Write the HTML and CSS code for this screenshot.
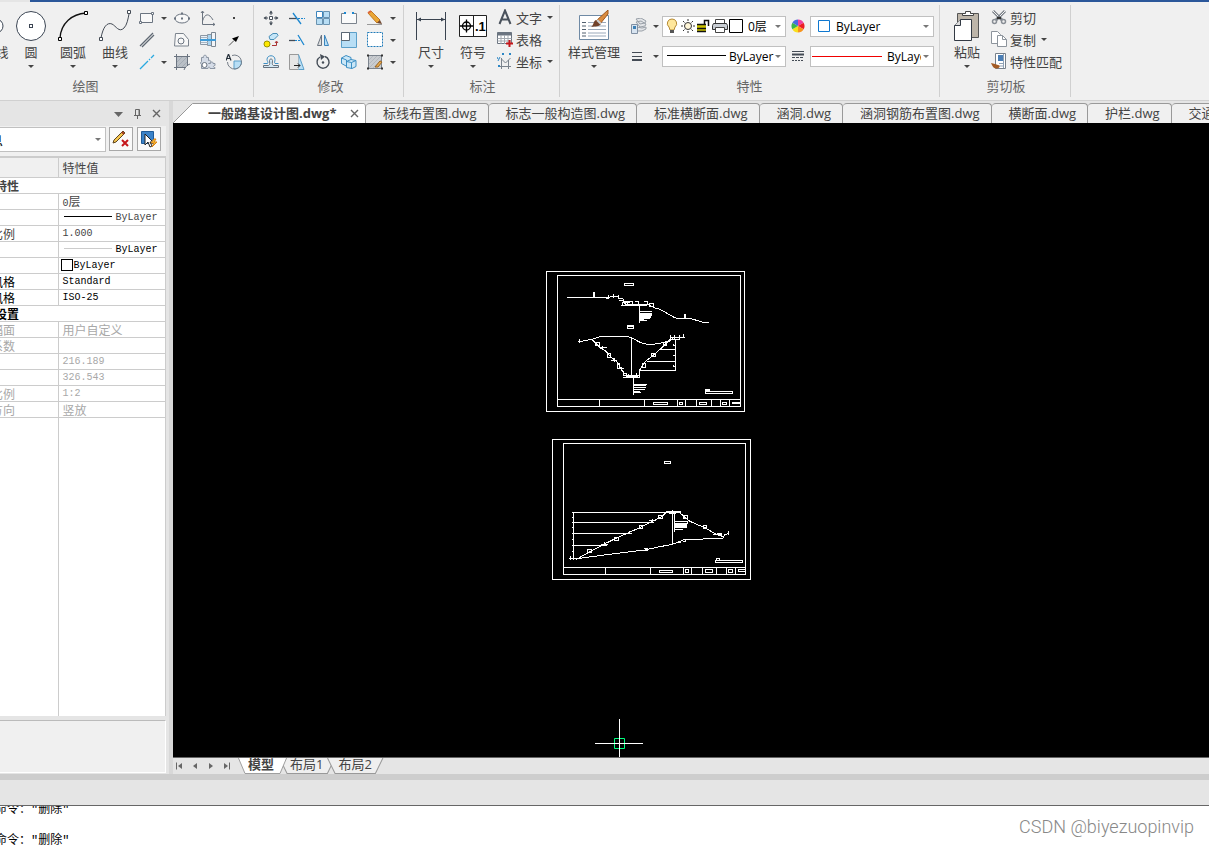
FILE: index.html
```html
<!DOCTYPE html>
<html lang="zh-CN">
<head>
    <meta charset="UTF-8" />
    <meta name="viewport" content="width=device-width, initial-scale=1.0"/>
    <title>一般路基设计图.dwg</title>
    <link rel="stylesheet" href="styles.css">
</head>
<body>
    <div class="title-strip"></div>

    <header class="ribbon">
        <section class="group group-draw">
            <div class="tools">
                <button type="button" class="big-button">
                    <svg width="32" height="32" viewBox="0 0 32 32"><path d="M2 26 10 10H19" stroke="#3c4654"/><circle cx="23" cy="16" r="7" fill="#fff" stroke="#3c4654"/></svg>
                    <span>多段线</span><i class="caret"></i>
                </button>
                <button type="button" class="big-button">
                    <svg width="32" height="32" viewBox="0 0 32 32"><circle cx="16" cy="16" r="14.5" fill="#fff" stroke="#3c4654"/><rect x="14.5" y="14.5" width="3" height="3" fill="#fff" stroke="#3c4654"/></svg>
                    <span>圆</span><i class="caret"></i>
                </button>
                <button type="button" class="big-button">
                    <svg width="32" height="32" viewBox="0 0 32 32"><path d="M3 28C4 13 15 4 29 3" stroke="#111" stroke-width="1.3"/><path d="M1.5 27.5h3v3h-3zM27.500 1.500h3v3h-3z" fill="#fff" stroke="#000"/></svg>
                    <span>圆弧</span><i class="caret"></i>
                </button>
                <button type="button" class="big-button">
                    <svg width="32" height="32" viewBox="0 0 32 32"><path d="M2 28C4 17 8 12 13 14C17 16 20 23 25 18C28 15 29 9 30 4" stroke="#444b55"/><path d="M.5 27.500h3v3h-3zM28.500.5h3v3h-3z" fill="#fff" stroke="#444b55"/></svg>
                    <span>曲线</span><i class="caret"></i>
                </button>
                <div class="icon-grid draw-grid">
                    <button type="button" aria-label="矩形"><svg width="16" height="16" viewBox="0 0 16 16"><path d="M1.500 3.500h12v9h-12z" fill="#f8f8f8" stroke="#6b7480"/><path d="M12.500 2.500h2v2h-2zM.5 11.500h2v2h-2z" fill="#fff" stroke="#6b7480"/></svg></button>
                    <button type="button" aria-label="矩形选项"><i class="caret"></i></button>
                    <button type="button" aria-label="椭圆"><svg width="16" height="16" viewBox="0 0 16 16"><ellipse cx="8" cy="8.500" rx="7" ry="4.500" fill="#f8f8f8" stroke="#6b7480"/><path d="M7 7.500h2v2H7zM7 2.500h2v2H7zM0 7.500h2v2H0zM14 7.500h2v2h-2z" fill="#6b7480"/></svg></button>
                    <button type="button" aria-label="抛物线"><svg width="16" height="16" viewBox="0 0 16 16"><path d="M2.500 1v13.500H15M2.500 11C5 3 9 3 13 10M1 3l1.500-2L4 3M13 13l2 1.500-2 1" stroke="#6b7480"/></svg></button>
                    <button type="button" aria-label="点"><svg width="16" height="16" viewBox="0 0 16 16"><path d="M7 7h2v2H7z" fill="#444"/></svg></button>

                    <button type="button" aria-label="平行线"><svg width="16" height="16" viewBox="0 0 16 16"><path d="M1 14 14 1M3 15 15 3" stroke="#5f6873" stroke-width="1.300"/></svg></button>
                    <span></span>
                    <button type="button" aria-label="面域"><svg width="16" height="16" viewBox="0 0 16 16"><path d="M1.500 1.500h8l5 6v6.500H.5z" fill="#f8f8f8" stroke="#7b838d"/><circle cx="7" cy="9" r="3" stroke="#6b7480"/></svg></button>
                    <button type="button" aria-label="轴"><svg width="16" height="16" viewBox="0 0 16 16"><path d="M.5 3.500h7v9h-7z" fill="#e9f1f8" stroke="#8b97a4"/><path d="M7.500 2.500h4v11h-4z" fill="#a9d3ef" stroke="#8b97a4"/><path d="M11.500.5h4v14h-4z" fill="#f3f5f8" stroke="#7b8793"/><path d="M0 8h16" stroke="#3d9bd8" stroke-width="2"/><path d="M1 5.500h7M1 10.500h7" stroke="#a7b6c4"/></svg></button>
                    <button type="button" aria-label="箭头"><svg width="16" height="16" viewBox="0 0 16 16"><path d="M3 13.500 8 8.500" stroke="#555"/><path d="M13 4 6 6.500l4 3.500z" fill="#000"/></svg></button>

                    <button type="button" aria-label="构造线"><svg width="16" height="16" viewBox="0 0 16 16"><path d="M1 15 9 7M10 6l1-1M12 4l3-3" stroke="#29a9e0" stroke-width="1.300"/></svg></button>
                    <button type="button" aria-label="构造线选项"><i class="caret"></i></button>
                    <button type="button" aria-label="填充"><svg width="16" height="16" viewBox="0 0 16 16"><path d="M2.500 2.500h11v8l-3 3h-8z" fill="#b9bfc6"/><path d="M3 8l5-5M3 13 13 3M8 13l5-5" stroke="#a3abb4"/><path d="M2.500 0v16M13.500 0v12M0 2.500h16M0 13.500h12M16 10c-3 1-5 3-6 6" stroke="#6b7480"/></svg></button>
                    <button type="button" aria-label="齿轮"><svg width="16" height="16" viewBox="0 0 16 16"><path d="M1.500 3.500h2c-1-3 4-3 3 0h2v3c3-1 3 3 0 3h2c0-2 3-2 2.500 0h2v2c-2 0-2 2 0 2v1h-5c0-2-2-2-2 0h-6.500v-4c-1 0-1-3 0-3z" fill="#d5dce7" stroke="#8b95a3"/><circle cx="4.500" cy="11" r="2.500" fill="#fff" stroke="#6b7480"/></svg></button>
                    <button type="button" aria-label="文字定位"><svg width="16" height="16" viewBox="0 0 16 16"><path d="M8 7h7.500A7 7 0 0 1 8 15z" fill="#b8def5" stroke="#5d9fc9"/><path d="M6 1.500A7 7 0 1 1 1.500 8" stroke="#777f89"/><path d="M0 6.500 2.500 0 5 6.500M1 4.500h3" stroke="#26303a" stroke-width="1.200"/></svg></button>
                </div>
            </div>
            <h2>绘图</h2>
        </section>

        <section class="group group-modify">
            <div class="tools">
                <div class="icon-grid modify-grid">
                    <button type="button" aria-label="移动"><svg width="16" height="16" viewBox="0 0 16 16"><path d="M8 1v4M8 11v4M1 8h4M11 8h4" stroke="#4a525c"/><path d="M6 3.500h4L8 .5zM6 12.500h4l-2 3zM3.500 6v4L.5 8zM12.500 6v4l3-2z" fill="#4a525c"/><path d="M6.500 6.500h3v3h-3z" fill="#fff" stroke="#4a525c"/></svg></button>
                    <button type="button" aria-label="修剪"><svg width="16" height="16" viewBox="0 0 16 16"><path d="M0 8.500h8" stroke="#444b55" stroke-width="1.300"/><path d="M9 8.500h7" stroke="#1c87d0" stroke-dasharray="2 1"/><path d="M4 3 12 14" stroke="#1c87d0" stroke-width="1.300"/></svg></button>
                    <button type="button" aria-label="阵列"><svg width="16" height="16" viewBox="0 0 16 16"><path d="M1.500 1.500h6v6h-6z" fill="#fff" stroke="#3b85bd"/><path d="M8.500 1.500h6v6h-6zM1.500 8.500h6v6h-6zM8.500 8.500h6v6h-6z" fill="#b8def5" stroke="#6a93b0"/></svg></button>
                    <button type="button" aria-label="打断"><svg width="16" height="16" viewBox="0 0 16 16"><path d="M4 3.500H.5v10h15v-10H12" fill="#fafafa" stroke="#7b838d"/><path d="M3 2h2v2H3zM11 2h2v2h-2z" fill="#1c87d0"/></svg></button>
                    <button type="button" aria-label="删除"><svg width="16" height="16" viewBox="0 0 16 16"><path d="M0 14.500h15" stroke="#999"/><path d="M1 3 4 1l9 9-3 3z" fill="#eaa737" stroke="#c17822"/><path d="M10 13l3-3 2 4z" fill="#734a33"/><path d="M1 3 4 1" stroke="#dd663b" stroke-width="2"/></svg></button>
                    <button type="button" aria-label="删除选项"><i class="caret"></i></button>

                    <button type="button" aria-label="复制对象"><svg width="16" height="16" viewBox="0 0 16 16"><circle cx="4" cy="12" r="3" fill="#ffe900" stroke="#9b9300"/><path d="M6 4.500 10 1.500h4l1 2-4 4H7z" fill="#c5e6f8" stroke="#4a8fb8"/><path d="M9 13.500h4.500V10M12 11l1.500-2L15 11" stroke="#a33"/></svg></button>
                    <button type="button" aria-label="延伸"><svg width="16" height="16" viewBox="0 0 16 16"><path d="M0 8.500h6" stroke="#444b55" stroke-width="1.300"/><path d="M6 8.500h5" stroke="#1c87d0" stroke-dasharray="2 1"/><path d="m9 3 6 10" stroke="#1c87d0" stroke-width="1.300"/></svg></button>
                    <button type="button" aria-label="镜像"><svg width="16" height="16" viewBox="0 0 16 16"><path d="M6.500 3v10.500h-4z" fill="#ddd" stroke="#6b7480"/><path d="M9.500 3v10.500h4z" fill="#b8def5" stroke="#3b85bd"/></svg></button>
                    <button type="button" aria-label="缩放"><svg width="16" height="16" viewBox="0 0 16 16"><path d="M.5.5h15v15H.5z" fill="#b8def5" stroke="#5b9fc9"/><path d="M.5.5h8v8h-8z" fill="#fff" stroke="#5b6672"/></svg></button>
                    <button type="button" aria-label="选择"><svg width="16" height="16" viewBox="0 0 16 16"><path d="M.5.5h15v14H.5z" fill="#fff" stroke="#1f7ab8" stroke-dasharray="2 1"/></svg></button>
                    <button type="button" aria-label="选择选项"><i class="caret"></i></button>

                    <button type="button" aria-label="偏移"><svg width="16" height="16" viewBox="0 0 16 16"><path d="M.5 9.500h4C5.500 8 4 7 4 5.500c0-5 8-5 8 0 0 2-1 3 0 4h3.500" stroke="#3d8fc4"/><path d="M.5 13.500h15v-2h-5c-2-1-1-3-1-5 0-2-3-2-3 0 0 2 1 4-1 5h-5z" fill="#d4e9f6" stroke="#66717d"/></svg></button>
                    <button type="button" aria-label="拉伸"><svg width="16" height="16" viewBox="0 0 16 16"><path d="M.5.5h9v15h-9z" fill="#e6e6e6" stroke="#999"/><path d="M9.500.5 15 15.500H9.500" fill="#b8def5" stroke="#5b9fc9"/><path d="M5 11.500h6M9 9.500l2 2-2 2" stroke="#222"/></svg></button>
                    <button type="button" aria-label="旋转"><svg width="16" height="16" viewBox="0 0 16 16"><path d="M10 2.500A6 6 0 1 1 5 3" stroke="#454d57" stroke-width="1.400"/><path d="M5 0l5 2.500L6 6z" fill="#454d57"/><circle cx="8" cy="8.500" r="1.200" fill="#454d57"/></svg></button>
                    <button type="button" aria-label="三维"><svg width="16" height="16" viewBox="0 0 16 16"><path d="M.5 4 5 1.500l5 2v7l-4 2-5.500-3z" fill="#cbe7f7" stroke="#3d8fc4"/><path d="M5.500 7.500 10 5.500l5 1v6l-4 2-5.500-1z" fill="#cbe7f7" stroke="#3d8fc4"/><path d="m5.500 7.500 5 1 4.500-2M10.500 8.500v6M.5 4l5 2V12" stroke="#3d8fc4"/></svg></button>
                    <button type="button" aria-label="编辑填充"><svg width="16" height="16" viewBox="0 0 16 16"><path d="M1.500 1.500h13v13h-13z" fill="#c9ccd0" stroke="#7b838d"/><path d="M2 6l4-4M2 10l8-8M2 14 14 2M6 14l8-8" stroke="#b3b8be"/><path d="M0 1.500h2M0 14.500h2M14 1.500h2M14 14.500h2" stroke="#333" stroke-width="2"/><path d="m8 13 5-6 2 1-4 5z" fill="#e9ad4f" stroke="#9b6524"/></svg></button>
                    <button type="button" aria-label="填充选项"><i class="caret"></i></button>
                </div>
            </div>
            <h2>修改</h2>
        </section>

        <section class="group group-dimension">
            <div class="tools">
                <button type="button" class="big-button">
                    <svg width="32" height="32" viewBox="0 0 32 32"><path d="M1.500 2v28M30.500 2v28M2 9.500h28" stroke="#3a4350"/><path d="m2 9.500 4-2v4zM30 9.500l-4-2v4z" fill="#3a4350"/></svg>
                    <span>尺寸</span><i class="caret"></i>
                </button>
                <button type="button" class="big-button">
                    <svg width="32" height="32" viewBox="0 0 32 32"><path d="M2.500 5.500h27v21h-27zM16.500 5v22" fill="#fff" stroke="#222"/><circle cx="9.500" cy="16" r="4" stroke="#000" stroke-width="1.300"/><path d="M3 16h13M9.500 9.500v13" stroke="#000" stroke-width="1.300"/><text x="18" y="21" class="icon-text">.1</text></svg>
                    <span>符号</span><i class="caret"></i>
                </button>
                <div class="tool-list">
                    <button type="button"><svg width="16" height="16" viewBox="0 0 16 16"><path d="M2.500 15 8 1.500 13.500 15M4.500 10.500h7" stroke="#4a525c" stroke-width="2"/></svg>文字<i class="caret"></i></button>
                    <button type="button"><svg width="16" height="16" viewBox="0 0 16 16"><path d="M.5 1.500h14v11H.5z" fill="#fff" stroke="#6b7480"/><path d="M.5 1.500h14v3H.5z" fill="#6b7480"/><path d="M.5 7.500h14M.5 10h14M4 4v9M7.500 4v9M11 4v9" stroke="#a3a9b0"/><path d="M9 12.500h7M12.500 9v7" stroke="#c4171b" stroke-width="2"/></svg>表格</button>
                    <button type="button"><svg width="16" height="16" viewBox="0 0 16 16"><path d="M4.500 5v11M2 13.500h12M4.500 6l4 4 5-5M11.500 7v9" stroke="#7b838d"/><path d="m5 0 2 2M7 0 5 2M12 0l2 2M14 0l-2 2M0 4l1 2M3 4 1 8M1 12l2 2M3 12l-2 2" stroke="#2c86c5"/></svg>坐标<i class="caret"></i></button>
                </div>
            </div>
            <h2>标注</h2>
        </section>

        <section class="group group-props">
            <div class="tools">
                <button type="button" class="big-button wide">
                    <svg width="32" height="32" viewBox="0 0 32 32"><path d="M1.500 5.500h29v24h-29z" fill="#fff" stroke="#6f8aa5"/><path d="M4 12.500h4M4 16h4M4 19.500h4M4 23h4M4 26h4" stroke="#52606f"/><path d="M10 12.500h18M10 16h18M10 19.500h18M10 23h18M10 26h18" stroke="#9aa9ba"/><path d="M30 0v4l-8 10-4-3z" fill="#d98b3e" stroke="#a0561b"/><path d="M18 10l5 4c-2 3-5 2-10 3 3-2 2-6 5-7z" fill="#70412a"/><path d="m19 10 4 4" stroke="#c9cdd0" stroke-width="2"/></svg>
                    <span>样式管理</span><i class="caret"></i>
                </button>
                <div class="prop-grid">
                    <button type="button" aria-label="图层管理"><svg width="18" height="16" viewBox="0 0 18 16"><path d="m6 1 5-1 5 3-1 2-5 1zM6 4l5-1 5 3-1 2-5 1z" fill="#e3e5e8" stroke="#9aa1a9"/><path d="m7 9 5 1 4-1v2l-4 2H7z" fill="#e3e5e8" stroke="#9aa1a9"/><path d="M1.500 6.500h6v9h-6z" fill="#d8e4f0" stroke="#8090a3"/><path d="M3 8h3v3H3z" fill="#3d81b7"/></svg><i class="caret"></i></button>
                    <div class="combo">
                        <svg width="16" height="16" viewBox="0 0 16 16"><path d="M8 1a4.500 4.500 0 0 0-3 8l1 3h4l1-3A4.500 4.500 0 0 0 8 1z" fill="#ffe79b" stroke="#b58a35"/><path d="M6 12h4v3H6z" fill="#555"/></svg>
                        <svg width="16" height="16" viewBox="0 0 16 16"><circle cx="8" cy="8" r="3.500" fill="#fff6d8" stroke="#333"/><path d="M8 1v2M8 13v2M1 8h2M13 8h2M3 3l1.500 1.500M11.500 11.500 13 13M3 13l1.500-1.500M11.500 4.500 13 3" stroke="#333"/></svg>
                        <svg width="16" height="16" viewBox="0 0 16 16"><path d="M1 6h9v8H1z" fill="#c9c000"/><path d="M1 6.500h9M1 10.500h9M1 13.500h9M8.500 6V2.500h4V8" stroke="#111" stroke-width="1.500"/></svg>
                        <svg width="16" height="16" viewBox="0 0 16 16"><path d="M3.500 5V1.500h9V5" fill="#fff" stroke="#444"/><path d="M1.500 5.500h13l1 2v4H.5v-4z" fill="#c8cdd3" stroke="#333"/><path d="M3.500 9.500h9v5h-9z" fill="#fff" stroke="#444"/></svg>
                        <svg width="16" height="16" viewBox="0 0 16 16"><path d="M1.500 1.500h13v13h-13z" fill="#fff" stroke="#000"/></svg>
                        <select aria-label="图层"><option>0层</option></select><i class="caret light"></i>
                    </div>
                    <svg width="16" height="16" viewBox="0 0 16 16"><path d="M8 8V1.500a6.500 6.500 0 0 1 5.600 3.200z" fill="#ee3fa1"/><path d="m8 8 5.600-3.300a6.500 6.500 0 0 1 0 6.600z" fill="#ec1c24"/><path d="m8 8 5.600 3.300A6.500 6.500 0 0 1 8 14.500z" fill="#f7941d"/><path d="M8 8v6.500a6.500 6.500 0 0 1-5.600-3.200z" fill="#f8df1c"/><path d="m8 8-5.600 3.300a6.500 6.500 0 0 1 0-6.600z" fill="#3ab54a"/><path d="M8 8 2.400 4.700A6.500 6.500 0 0 1 8 1.500z" fill="#466be0"/></svg>
                    <div class="combo color-combo">
                        <svg width="12" height="12" viewBox="0 0 12 12"><path d="M.5.5h11v11H.5z" fill="#fff" stroke="#0f78d0"/></svg>
                        <select aria-label="颜色"><option>ByLayer</option></select><i class="caret light"></i>
                    </div>
                    <button type="button" aria-label="线宽设置"><svg width="18" height="16" viewBox="0 0 18 16"><path d="M2 4.500h10M2 8.500h10" stroke="#444b55"/><path d="M2 12h10" stroke="#444b55" stroke-width="2"/></svg><i class="caret"></i></button>
                    <div class="combo line-combo">
                        <svg width="60" height="16" viewBox="0 0 60 16"><path d="M0 7.500h59" stroke="#000"/></svg>
                        <select aria-label="线型"><option>ByLayer</option></select><i class="caret light"></i>
                    </div>
                    <svg width="16" height="16" viewBox="0 0 16 16"><path d="M2 3.500h12" stroke="#444b55"/><path d="M2 6.500h12" stroke="#444b55" stroke-width="2"/><path d="M2 9.500h12" stroke="#444b55" stroke-dasharray="3 1"/><path d="M2 12.500h12" stroke="#444b55" stroke-dasharray="2 1"/></svg>
                    <div class="combo weight-combo">
                        <svg width="71" height="16" viewBox="0 0 71 16"><path d="M0 8.500h70" stroke="#f00000"/></svg>
                        <select aria-label="线宽"><option>ByLayer</option></select><i class="caret light"></i>
                    </div>
                </div>
            </div>
            <h2>特性</h2>
        </section>

        <section class="group group-clipboard">
            <div class="tools">
                <button type="button" class="big-button">
                    <svg width="32" height="32" viewBox="0 0 32 32"><path d="M6.500 3.500h21v24h-21z" fill="#bdb5a9" stroke="#555"/><path d="M11.500 5.500v-2h3v-2h5v2h3v2z" fill="#fff" stroke="#444"/><path d="M9.500 9.500h11v21h-17v-15z" fill="#fff" stroke="#333a44"/><path d="M3.500 15.500h6v-6" fill="#dcdcdc" stroke="#333a44"/></svg>
                    <span>粘贴</span><i class="caret"></i>
                </button>
                <div class="tool-list">
                    <button type="button"><svg width="16" height="16" viewBox="0 0 16 16"><path d="M2 2l9 9M14 2l-9 9" stroke="#7b8188" stroke-width="3"/><path d="M2 2l5 5M14 2 9 7" stroke="#f4f4f4"/><path d="M6 8h4v2H6z" fill="#333"/><circle cx="3.500" cy="12.500" r="2" stroke="#888e95" stroke-width="1.500"/><circle cx="12.500" cy="12.500" r="2" stroke="#888e95" stroke-width="1.500"/></svg>剪切</button>
                    <button type="button"><svg width="16" height="16" viewBox="0 0 16 16"><path d="M.5.5h6l3 3v9h-9z" fill="#fff" stroke="#8d949c"/><path d="M6.500 4.500h5l4 4v7h-9z" fill="#fff" stroke="#8d949c"/><path d="M11.500 4.500v4h4" stroke="#8d949c"/></svg>复制<i class="caret"></i></button>
                    <button type="button"><svg width="16" height="16" viewBox="0 0 16 16"><path d="M4.500.5h10v15h-10z" fill="#fff" stroke="#77808a"/><path d="M7 2h6v6H7z" fill="#4a7eb5"/><path d="M12.500 1v14M8 10.500h5M9 13h4" stroke="#8fa1b5"/><path d="m0 10 4 1 3 1c3 0 2 3-1 3.500-3 0-4-1-6-5.500z" fill="#a35b24"/></svg>特性匹配</button>
                </div>
            </div>
            <h2>剪切板</h2>
        </section>
    </header>

    <div class="workspace">
        <aside class="panel">
            <div class="panel-header">
                <button type="button" aria-label="菜单"><svg width="10" height="10" viewBox="0 0 10 10"><path d="M0 3h9L4.500 8z" fill="#666"/></svg></button>
                <button type="button" aria-label="固定"><svg width="10" height="10" viewBox="0 0 10 10"><path d="M2.500 6V.5h4V6M1 6.500h7M4.500 7v3M6 1v5" stroke="#666"/></svg></button>
                <button type="button" aria-label="关闭"><svg width="10" height="10" viewBox="0 0 10 10"><path d="m1 1 7 7M8 1 1 8" stroke="#666" stroke-width="1.400"/></svg></button>
            </div>
            <div class="panel-tools">
                <div class="combo selection-combo">
                    <select aria-label="选择对象"><option>无选择信息</option></select><i class="caret light"></i>
                </div>
                <button type="button" aria-label="清除"><svg width="18" height="18" viewBox="0 0 18 18"><path d="m1 13 1-3L11 1l2 2-9 9z" fill="#f6c64e" stroke="#5e4520"/><path d="m10 2 2 2" stroke="#a33b21" stroke-width="2"/><path d="m10 10 6 6M16 10l-6 6" stroke="#c5161b" stroke-width="2"/></svg></button>
                <button type="button" aria-label="快速选择"><svg width="18" height="18" viewBox="0 0 18 18"><path d="M1.500 1.500h12v12h-12z" fill="#3b82c8" stroke="#205b97"/><path d="M5 4v11l3-3 2 5 2-1-2-4h3z" fill="#fff" stroke="#222"/><path d="m14 9-3 4h3l-2 4 5-5h-3l2-3z" fill="#ffc83a" stroke="#d98213"/></svg></button>
            </div>
            <div class="props">
                <table>
                    <thead>
                        <tr><th class="key">特性</th><th>特性值</th></tr>
                    </thead>
                    <tbody>
                        <tr class="section"><th colspan="2">基本特性</th></tr>
                        <tr><td class="key">图层</td><td><span class="latin">0</span>层</td></tr>
                        <tr><td class="key">线型</td><td class="latin"><span class="sample"></span>ByLayer</td></tr>
                        <tr><td class="key">线型比例</td><td class="latin">1.000</td></tr>
                        <tr class="strong"><td class="key">线宽</td><td class="latin"><span class="sample pale"></span>ByLayer</td></tr>
                        <tr class="strong"><td class="key">颜色</td><td class="latin"><span class="swatch"></span>ByLayer</td></tr>
                        <tr class="strong"><td class="key">文字风格</td><td class="latin">Standard</td></tr>
                        <tr class="strong"><td class="key">标注风格</td><td class="latin">ISO-25</td></tr>
                        <tr class="section strong"><th colspan="2">图纸设置</th></tr>
                        <tr class="disabled"><td class="key">图纸幅面</td><td>用户自定义</td></tr>
                        <tr class="disabled"><td class="key">调整系数</td><td></td></tr>
                        <tr class="disabled"><td class="key">高度</td><td class="latin">216.189</td></tr>
                        <tr class="disabled"><td class="key">宽度</td><td class="latin">326.543</td></tr>
                        <tr class="disabled"><td class="key">绘图比例</td><td class="latin">1:2</td></tr>
                        <tr class="disabled"><td class="key">图纸方向</td><td>竖放</td></tr>
                    </tbody>
                </table>
                <div class="blank"></div>
            </div>
            <div class="hint"></div>
        </aside>

        <main class="drawing-area">
            <nav class="file-tabs">
                <a href="#" class="file-tab active">
                    <svg width="20" height="20" viewBox="0 0 20 20"><path d="M0 20 20 0v20z" fill="#fff"/><path d="M0 20 19.500.5h.5" stroke="#999"/></svg>
                    <span>一般路基设计图.dwg*</span>
                    <svg class="close" width="9" height="9" viewBox="0 0 9 9"><path d="m1 1 7 7M8 1 1 8" stroke="#666" stroke-width="1.400"/></svg>
                </a>
                <a href="#" class="file-tab">标线布置图.dwg</a>
                <a href="#" class="file-tab">标志一般构造图.dwg</a>
                <a href="#" class="file-tab">标准横断面.dwg</a>
                <a href="#" class="file-tab">涵洞.dwg</a>
                <a href="#" class="file-tab">涵洞钢筋布置图.dwg</a>
                <a href="#" class="file-tab">横断面.dwg</a>
                <a href="#" class="file-tab">护栏.dwg</a>
                <a href="#" class="file-tab">交通标志.dwg</a>
            </nav>

            <div class="canvas">
                <!-- sheet 1: cross sections -->
                <svg class="sheet sheet-one" width="199" height="141" viewBox="18 18 597 423">
                    <path d="M19.500 19.500h594v420h-594zM52.500 31.500h549v393h-549zM52 403.500h549M178.500 403v21M313.500 403v21M412.500 403v21M436.500 403v21M469.500 403v21M514.500 403v21M541.500 403v21M568.500 403v21"/>
                    <path d="M340 412h43v6h-43zM418 412h9v6h-9zM478 412h21v6h-21zM547 412h12v6h-12zM577 412h20v3h-20zM496 379h82v6h-82zM497 374h12v3h-12z"/>
                    <path d="M253 55h28v6h-28zM262 181h19v9h-19zM262 184h19"/>
                    <path d="M81 97.500h123M160 96V82M163 96V82M199 101l12-6h24M206 90v12M220 88v12M235 91v12M238 100h10l6 12h16M238 107h10l8 10h64l24 12h14M246 112v12M244 122h12M250 108h12v12M264 109h12v9M286 109h10v9M313 110h9v8M328 116h12v9h-12zM256 120h64M346 130h10M358 133l20 10 26 15 8 2h38l36 11 20 1M433 161V148M436 161V148"/>
                    <path d="M298.500 121v53M300 139h36M300 145h37M300 148h35M300 151h35M300 154h33M300 157h33M300 160h30M300 163h12M298 166h24"/>
                    <path d="M115 228h14l30-6 18-6 20-3h60l18 5 25 14 25 7 30-3 34-8 10-8M119 222v12M389 218h45M391 211v14M404 211v14M418 211v14M431 208v12M388 222h28"/>
                    <path d="M154 222l26 26 17 10 14 17 20 15 10 18 10 14v10h16M166 233h13v9h-13zM180 248h20M188 243v10M202 265h10v11h-10zM214 285h18M222 279v12M232 295h7v15h-7zM234 310h19M243 305v12M250 325h8v12h-8M274.500 216v116M258 330h40v7h-38M262 334h32M265 328v11M288 325v14"/>
                    <path d="M298 316.500h108.500V222M298 330V317l15-25 28-22 22-20 25-24M322 289.500h84M356 253.500h50M370 232h10v10h-10zM335 265h11v10h-11zM307 295h9v12h-9zM401 240h6M401 271h6M401 303h6M400 238v5M400 269v5M400 301v5"/>
                    <path d="M280.500 334v56M280 359h40M280 362h38M280 368h38M280 374h36M280 378h20M280 382h24"/>
                </svg>

                <!-- sheet 2: embankment slope -->
                <svg class="sheet sheet-two" width="199" height="141" viewBox="18 18 597 423">
                    <path d="M19.500 19.500h594v420h-594zM52.500 31.500h546v393h-546zM52 403.500h546M178.500 403v21M313.500 403v21M412.500 403v21M436.500 403v21M469.500 403v21M511.500 403v21M541.500 403v21M568.500 403v21"/>
                    <path d="M340 412h40v6h-40zM418 409h9v9h-9zM478 409h21v9h-21zM547 409h12v9h-12zM577 409h20v6h-20zM508 382h82v6h-82zM511 376h9v6h-9zM355 85h19v6h-19z"/>
                    <path d="M79 238.500h285M82.500 238v138M79 268.500h246M79 301.500h177M79 337.500h105M79 253h3M79 283h3M79 319h3M79 355h3M69 377.500h36M73 370v10M82 376v4"/>
                    <path d="M91 379l32-18 52-28 37-18 40-18 34-15 36-18 24-13 16-13M124 349h12v10h-12zM165 333h20M174 328v8M205 314h12v9h-12zM244 300h14M250 295v7M280 278h9v9h-9zM310 263h20M320 258v9M338 248h12v9h-12z"/>
                    <path d="M361 235.500h45M364 238.500h40M370 241.500h20M379.500 230v104M385.500 238v58M386 265.500h39M387 271h36M387 274h36M387 277h35M387 280h35M387 283h35M387 288h24M424 266v8"/>
                    <path d="M400 238l28 25 24 11 25 10 30 18 24 10M411 247h12v10h-12zM472 278h10v9h-10zM514 301h12v8M502 304h26M535 306l15-6M547 293v12M532 314l4-8"/>
                    <path d="M100 376l75-10 55-7 66-8 46-10 37-7 40-16h53l60-3M293 352h10v-5h-8M391 328h12v-4M410 325h8v-6"/>
                </svg>

                <!-- crosshair -->
                <svg class="crosshair" width="49" height="38" viewBox="0 0 49 38"><path d="M19.500 19.500h10v10h-10z" stroke="#00ff7f"/><path d="M0 24.500h48M24.500 0v38" stroke="#fff"/></svg>
            </div>

            <nav class="layout-tabs">
                <div class="nav-buttons">
                    <button type="button" aria-label="第一个"><svg width="8" height="8" viewBox="0 0 8 8"><path d="M1.500.5v7" stroke="#666"/><path d="M7 1v6L3 4z" fill="#666"/></svg></button>
                    <button type="button" aria-label="上一个"><svg width="8" height="8" viewBox="0 0 8 8"><path d="M6 1v6L2 4z" fill="#666"/></svg></button>
                    <button type="button" aria-label="下一个"><svg width="8" height="8" viewBox="0 0 8 8"><path d="M2 1v6l4-3z" fill="#666"/></svg></button>
                    <button type="button" aria-label="最后一个"><svg width="8" height="8" viewBox="0 0 8 8"><path d="M1 1v6l4-3z" fill="#666"/><path d="M6.500.5v7" stroke="#666"/></svg></button>
                </div>
                <a href="#" class="layout-tab active"><svg viewBox="0 0 56 16" preserveAspectRatio="none"><path d="M.5 0 8 15.500h40L55.500 0" fill="#fff" stroke="#999"/></svg><span>模型</span></a>
                <a href="#" class="layout-tab"><svg viewBox="0 0 56 16" preserveAspectRatio="none"><path d="M.5 0 8 15.500h40L55.500 0" fill="#efefef" stroke="#999"/></svg><span>布局1</span></a>
                <a href="#" class="layout-tab"><svg viewBox="0 0 56 16" preserveAspectRatio="none"><path d="M.5 0 8 15.500h40L55.500 0" fill="#efefef" stroke="#999"/></svg><span>布局2</span></a>
            </nav>
        </main>
    </div>

    <div class="command-bar"></div>
    <footer class="console">
        <div class="log">
            <p>命令："删除"</p>
            <p>命令："删除"</p>
        </div>
        <div class="watermark">CSDN @biyezuopinvip</div>
    </footer>
</body>
</html>
```

FILE: styles.css
```css
* {
    box-sizing: border-box;
}

body {
    margin: 0;
    height: 100vh;
    display: flex;
    flex-direction: column;
    overflow: hidden;
    background-color: #e5e5e5;
    font-family: "Open Sans", "Noto Sans CJK SC", sans-serif;
    font-size: 13px;
    color: #444;
}

button {
    display: flex;
    align-items: center;
    justify-content: center;
    margin: 0;
    padding: 0;
    border: none;
    background: none;
    font: inherit;
    color: inherit;
    white-space: nowrap;
}

a {
    color: inherit;
    text-decoration: none;
}

svg {
    display: block;
    flex-shrink: 0;
    fill: none;
}

.caret {
    flex-shrink: 0;
    border: solid transparent;
    border-width: 3px 3px 0;
    border-top-color: #444;
}

.caret.light {
    border-top-color: #777;
}

.title-strip {
    flex-shrink: 0;
    height: 2px;
    margin-left: 30px;
    background-color: #2b579a;
}

/* ribbon */
.ribbon {
    display: flex;
    flex-shrink: 0;
    padding: 3px 0;
    background-color: #f0f0f0;
    border-bottom: 1px solid #d0d0d0;
}

.group {
    flex-shrink: 0;
    padding-top: 2px;
    border-right: 1px solid #d0d0d0;
}

.group h2 {
    margin: 0;
    padding-top: 2px;
    font-size: 13px;
    font-weight: normal;
    line-height: 22px;
    text-align: center;
    color: #666;
}

.group-draw {
    width: 254px;
}

.group-draw .tools {
    margin-left: -32px;
}

.group-draw h2 {
    padding-right: 82px;
}

.group-modify {
    width: 150px;
    padding-left: 4px;
}

.group-dimension {
    width: 156px;
    padding-left: 6px;
}

.group-props {
    width: 380px;
    padding-left: 4px;
}

.group-clipboard {
    width: 131px;
    padding-left: 6px;
}

.group-dimension h2,
.group-props h2,
.group-clipboard h2 {
    padding-right: 4px;
}

.tools {
    display: flex;
    height: 66px;
}

.big-button {
    flex-direction: column;
    justify-content: flex-start;
    flex-shrink: 0;
    width: 42px;
    padding-top: 3px;
    line-height: 20px;
}

.big-button.wide {
    width: 60px;
}

.big-button .caret {
    margin-top: 3px;
}

.icon-text {
    font: bold 13px "Liberation Sans", sans-serif;
    fill: #000;
}

.icon-grid {
    display: grid;
    grid-template-rows: repeat(3, 22px);
}

.draw-grid {
    grid-template-columns: 22px 11px 26px 26px 26px;
}

.modify-grid {
    grid-template-columns: repeat(5, 26px) 10px;
}

.tool-list {
    display: grid;
    grid-template-rows: repeat(3, 22px);
    padding-left: 3px;
}

.tool-list button {
    justify-content: flex-start;
    gap: 3px;
    padding-bottom: 2px;
}

.tool-list .caret {
    margin-left: 2px;
}

.prop-grid {
    display: grid;
    grid-template-columns: 32px 124px 24px 124px;
    grid-template-rows: 21px 21px;
    row-gap: 9px;
    align-items: center;
    align-content: center;
    padding: 2px 0 0 6px;
}

.prop-grid > svg {
    justify-self: center;
}

.prop-grid > button {
    gap: 5px;
    justify-content: flex-start;
}

.combo {
    display: flex;
    align-items: center;
    align-self: stretch;
    min-width: 0;
    padding: 0 4px 0 1px;
    border: 1px solid #c0c0c0;
    background-color: #fff;
}

.combo select {
    flex: 1;
    min-width: 0;
    height: 18px;
    padding: 0 0 0 4px;
    border: none;
    appearance: none;
    background: none;
    font-family: inherit;
    font-size: 12px;
    color: #000;
}

.color-combo {
    padding-left: 7px;
}

.color-combo select {
    padding-left: 6px;
}

.line-combo {
    padding-left: 4px;
}

.line-combo select {
    padding-left: 2px;
}

.weight-combo select {
    margin-right: 2px;
}

/* property panel */
.workspace {
    display: flex;
    flex: 1;
    min-height: 0;
}

.panel {
    display: flex;
    flex-direction: column;
    flex-shrink: 0;
    width: 173px;
    padding-right: 3px;
    padding-bottom: 1px;
    overflow: hidden;
    border-right: 4px solid #d8d8d8;
}

.panel-header {
    display: flex;
    justify-content: flex-end;
    align-items: center;
    gap: 9px;
    height: 25px;
    padding-right: 4px;
}

.panel-tools {
    display: flex;
    gap: 4px;
    height: 30px;
    padding: 1px 5px 4px 0;
    background-color: #f0f0f0;
}

.panel-tools button {
    width: 24px;
    height: 24px;
    border: 1px solid #a8a8a8;
    background-color: #fafafa;
}

.selection-combo {
    flex: 1;
    margin-left: -68px;
    margin-right: -1px;
}

.selection-combo select {
    font-size: 13px;
}

.props {
    display: flex;
    flex-direction: column;
    flex: 1;
    margin-left: -37px;
    margin-bottom: 4px;
    border-top: 2px solid #ccc;
    border-right: 1px solid #ccc;
    background-color: #fff;
    font-family: "Noto Sans CJK SC", sans-serif;
    font-size: 12px;
}

.props table {
    width: 100%;
    border-collapse: collapse;
    table-layout: fixed;
}

.props tr {
    height: 16px;
}

.props th,
.props td {
    height: 16px;
    padding: 0 4px;
    border-bottom: 1px solid #ccc;
    font-weight: normal;
    line-height: 14px;
    text-align: left;
    white-space: nowrap;
}

.props .key {
    width: 95px;
    border-right: 1px solid #ccc;
}

.props thead th {
    background-color: #f0f0f0;
    line-height: 19px;
}

.props .section th {
    padding-left: 8px;
    font-weight: bold;
}

.props .strong {
    color: #000;
}

.props .disabled {
    color: #a8a8a8;
}

.props .latin {
    font-family: "Liberation Mono", monospace;
    font-size: 10px;
}

.props span.latin {
    line-height: 1;
}

.sample {
    display: inline-block;
    width: 48px;
    margin: 0 4px 0 1px;
    border-top: 1px solid #000;
    vertical-align: middle;
}

.sample.pale {
    border-color: #ccc;
}

.swatch {
    display: inline-block;
    width: 12px;
    height: 12px;
    margin-left: -2px;
    margin-right: 1px;
    border: 1px solid #000;
    vertical-align: middle;
}

.blank {
    flex: 1;
    width: 96px;
    border-right: 1px solid #ccc;
}

.hint {
    height: 53px;
    border: solid #fff;
    border-width: 1px 1px 1px 0;
    border-top-color: #bbb;
    background-color: #f0f0f0;
}

/* drawing area */
.drawing-area {
    display: flex;
    flex-direction: column;
    flex: 1;
    min-width: 0;
}

.file-tabs {
    display: flex;
    flex-shrink: 0;
    height: 22px;
    padding-top: 2px;
    overflow: hidden;
}

.file-tab {
    flex-shrink: 0;
    padding: 0 11px 0 17px;
    border-top: 1px solid #999;
    border-right: 1px solid #999;
    border-radius: 4px 4px 0 0;
    background-color: #f0f0f0;
    line-height: 18px;
}

.file-tab.active {
    display: flex;
    align-items: center;
    width: 193px;
    padding: 0 6px 0 0;
    border-top: none;
    background: linear-gradient(#999 1px, #fff 1px) no-repeat 20px 0;
    font-weight: bold;
}

.file-tab.active span {
    padding-left: 15px;
    line-height: 20px;
}

.file-tab .close {
    margin-left: auto;
}

.canvas {
    position: relative;
    flex: 1;
    overflow: hidden;
    background-color: #000;
}

.sheet {
    position: absolute;
    stroke: #fff;
    stroke-width: 3;
    shape-rendering: crispEdges;
}

.sheet-one {
    left: 373px;
    top: 148px;
}

.sheet-two {
    left: 379px;
    top: 316px;
}

.crosshair {
    position: absolute;
    left: 422px;
    bottom: 0;
}

.layout-tabs {
    display: flex;
    flex-shrink: 0;
    height: 17px;
    border-top: 1px solid #666;
}

.nav-buttons {
    display: flex;
    gap: 8px;
    width: 65px;
    padding-left: 2px;
}

.layout-tab {
    position: relative;
    margin-right: -8px;
    padding: 0 12px 0 11px;
    line-height: 13px;
}

.layout-tab.active {
    z-index: 1;
    padding: 0 13px 0 10px;
    font-weight: bold;
}

.layout-tab svg {
    position: absolute;
    left: 0;
    top: 0;
    width: 100%;
    height: 16px;
}

.layout-tab span {
    position: relative;
}

/* command line */
.command-bar {
    flex-shrink: 0;
    height: 32px;
    border-top: 6px solid #cdcdcd;
    border-bottom: 1px solid #666;
}

.console {
    display: flex;
    justify-content: space-between;
    flex-shrink: 0;
    height: 40px;
    padding-right: 15px;
    overflow: hidden;
    background-color: #fff;
}

.log {
    display: flex;
    flex-direction: column;
    gap: 15px;
    margin: -4px 0 0 -5px;
    font-family: "Liberation Mono", "Noto Sans CJK SC", monospace;
    font-size: 12px;
    line-height: 16px;
    color: #000;
}

.log p {
    margin: 0;
}

.watermark {
    align-self: center;
    font-family: Roboto, sans-serif;
    font-size: 18px;
    font-weight: 300;
    color: #888;
}
```
